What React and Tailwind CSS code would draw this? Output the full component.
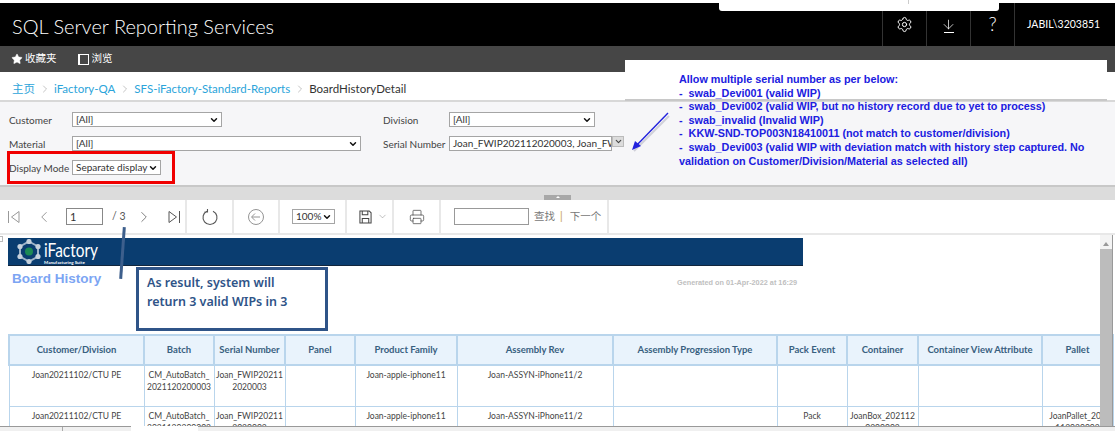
import React from "react";
import { Settings, ArrowDown, Star, Printer, ChevronDown, ChevronLeft, ChevronRight } from "lucide-react";

const ui = { fontFamily: 'Lato, "Noto Sans CJK SC", sans-serif' };
const arial = { fontFamily: '"Liberation Sans", sans-serif' };

const columns = [
  ["Customer/Division", 135],
  ["Batch", 70],
  ["Serial Number", 71],
  ["Panel", 70],
  ["Product Family", 102],
  ["Assembly Rev", 156],
  ["Assembly Progression Type", 164],
  ["Pack Event", 70],
  ["Container", 71],
  ["Container View Attribute", 124],
  ["Pallet", 71],
];

const rows = [
  ["Joan20211102/CTU PE", "CM_AutoBatch_\n2021120200003", "Joan_FWIP20211\n2020003", "", "Joan-apple-iphone11", "Joan-ASSYN-iPhone11/2", "", "", "", "", ""],
  ["Joan20211102/CTU PE", "CM_AutoBatch_\n2021120200003", "Joan_FWIP20211\n2020003", "", "Joan-apple-iphone11", "Joan-ASSYN-iPhone11/2", "", "Pack", "JoanBox_202112\n0200003", "", "JoanPallet_202\n112020003"],
];

const notes = [
  "Allow multiple serial number as per below:",
  "-  swab_Devi001 (valid WIP)",
  "-  swab_Devi002 (valid WIP, but no history record due to yet to process)",
  "-  swab_invalid (Invalid WIP)",
  "-  KKW-SND-TOP003N18410011 (not match to customer/division)",
  "-  swab_Devi003 (valid WIP with deviation match with history step captured. No",
  "validation on Customer/Division/Material as selected all)",
];

function Field({ children, className }) {
  return (
    <div className={"flex h-[15px] items-center justify-between border border-[#a5a5a5] bg-white pl-[3px] pr-[2px] text-[10px] leading-[13px] text-[#333] " + className}>
      <span className="whitespace-nowrap">{children}</span>
      <ChevronDown size={10} strokeWidth={3.5} className="shrink-0 text-[#111]" />
    </div>
  );
}

function Label({ children }) {
  return <span className="whitespace-nowrap pt-px text-[10px] leading-[15px] text-[#444]">{children}</span>;
}

function Logo() {
  const dots = [[12, 2.5], [21, 7.5], [21, 17.5], [12, 22.5], [3, 17.5], [3, 7.5]];
  return (
    <div className="flex items-center gap-[3px]">
      <svg width="24" height="25" viewBox="0 0 24 25">
        <polygon points="12,2.5 21,7.5 21,17.5 12,22.5 3,17.5 3,7.5" fill="none" stroke="#9fb4c8" strokeWidth="2" />
        {dots.map(([cx, cy]) => (
          <circle key={cx + "-" + cy} cx={cx} cy={cy} r="2.6" fill="#c5d0db" />
        ))}
        <circle cx="12" cy="12.5" r="4" fill="#1c8a55" />
      </svg>
      <div className="flex w-[54px] flex-col text-white">
        <span className="origin-left scale-x-[0.77] whitespace-nowrap text-[20px] leading-[20px]">iFactory</span>
        <span className="mt-[2px] whitespace-nowrap text-[4.5px] font-bold leading-[4px]">Manufacturing Suite</span>
      </div>
    </div>
  );
}

function ToolGroup({ children, className }) {
  return <div className={"flex h-full items-center border-r-2 border-[#e8e8e8] " + className}>{children}</div>;
}

export default function App() {
  return (
    <div className="relative flex h-[431px] w-[1115px] flex-col overflow-hidden bg-white" style={ui}>
      <div className="h-[3px] bg-white" />
      <header className="flex h-[43px] items-stretch justify-between bg-black text-white">
        <h1 className="pl-3 text-[20px] font-light leading-[47px]">SQL Server Reporting Services</h1>
        <div className="flex">
          <div className="flex w-[44px] items-center justify-center border-l border-[#333]"><Settings size={17} strokeWidth={1.4} /></div>
          <div className="flex w-[44px] items-center justify-center border-l border-[#333]">
            <div className="flex flex-col items-center">
              <ArrowDown size={15} strokeWidth={1.2} />
              <div className="h-px w-[10px] bg-white" />
            </div>
          </div>
          <div className="flex w-[44px] items-center justify-center border-l border-[#333] text-[19px] font-light">?</div>
          <div className="flex w-[101px] items-center border-l border-[#333] pl-[12px] text-[10.5px]">JABIL\3203851</div>
        </div>
      </header>
      <nav className="flex h-[26px] items-center gap-[21px] bg-[#464646] pl-[11px] text-[10.5px] text-white">
        <span className="flex items-center gap-[2px]"><Star size={12} fill="white" strokeWidth={1} />收藏夹</span>
        <span className="flex items-center gap-[3px]">
          <span className="h-[11px] w-[11px] border border-l-2 border-white" />
          浏览
        </span>
      </nav>
      <div className="flex h-[30px] items-center gap-[3.5px] border-b-2 border-[#d8d8d8] pl-3 pt-[5px] text-[11.5px] text-[#2ba4da]">
        <span>主页</span>
        <ChevronRight size={12} strokeWidth={1} className="text-[#888]" />
        <span>iFactory-QA</span>
        <ChevronRight size={12} strokeWidth={1} className="text-[#888]" />
        <span>SFS-iFactory-Standard-Reports</span>
        <ChevronRight size={12} strokeWidth={1} className="text-[#888]" />
        <span className="text-[#333]">BoardHistoryDetail</span>
      </div>
      <section className="grid h-[85px] grid-cols-[63px_289px_22px_66px_1fr] grid-rows-[15px_15px_15px] content-start gap-y-[9px] border-b-2 border-[#c8c8c8] bg-[#f6f6f8] pl-[9px] pt-[10px]">
        <Label>Customer</Label>
        <Field className="w-[150px]">[All]</Field>
        <span />
        <Label>Division</Label>
        <Field className="w-[146px]">[All]</Field>

        <Label>Material</Label>
        <Field className="w-[289px]">[All]</Field>
        <span />
        <Label>Serial Number</Label>
        <div className="flex h-full items-start">
          <div className="h-[15px] w-[163px] overflow-hidden whitespace-nowrap border border-[#a5a5a5] bg-white pl-[3px] text-[10px] leading-[13px] text-[#333]">
            Joan_FWIP202112020003, Joan_FWIP
          </div>
          <div className="flex h-[11px] w-[12px] items-center justify-center border border-[#bbb] bg-[#dcdcdc]">
            <ChevronDown size={9} strokeWidth={3} className="text-[#444]" />
          </div>
        </div>

        <Label>Display Mode</Label>
        <Field className="w-[89px]">Separate display</Field>
      </section>
      <div className="flex h-[13px] items-start justify-center bg-[#dcdcdc] pt-[8px]">
        <div className="flex h-[5px] w-[27px] justify-center bg-[#a8a8a8] pt-[1px]">
          <span className="h-0 w-0 border-x-[2px] border-b-[2px] border-x-transparent border-b-white" />
        </div>
      </div>
      <div className="flex h-[35px] items-stretch border-b-2 border-[#e8e8e8] text-[#777]">
        <ToolGroup className="w-[187px] pl-[5px] text-[10.5px]">
          <svg width="16" height="16" viewBox="0 0 16 16" fill="none" stroke="#999" strokeWidth="1" className="ml-[1px]"><path d="M2.5 2v12M13 2.5 5.5 8l7.5 5.5z" /></svg>
          <ChevronLeft size={18} strokeWidth={1} className="ml-[13px]" />
          <div className="ml-[13px] h-[17px] w-[37px] border border-[#888] bg-white pl-[3px] text-[11px] leading-[15px] text-[#333]">1</div>
          <span className="ml-[9px] text-[#555]">/ 3</span>
          <ChevronRight size={18} strokeWidth={1} className="ml-[9px] text-[#555]" />
          <svg width="16" height="16" viewBox="0 0 16 16" fill="none" stroke="#555" strokeWidth="1" className="ml-[13px]"><path d="M13.5 2v12M3 2.5 10.5 8 3 13.5z" /></svg>
        </ToolGroup>
        <ToolGroup className="w-[47px] justify-center">
          <svg width="18" height="18" viewBox="0 0 18 18" fill="none" stroke="#555" strokeWidth="1.1"><path d="M6 3.2A7 7 0 1 0 12 3.2M6.5 1v3H3.5" /></svg>
        </ToolGroup>
        <ToolGroup className="w-[46px] justify-center">
          <svg width="18" height="18" viewBox="0 0 18 18" fill="none" stroke="#888" strokeWidth="0.9"><circle cx="9" cy="9" r="7.5" /><path d="M13 9H5M8 5.5 4.5 9 8 12.5" /></svg>
        </ToolGroup>
        <ToolGroup className="w-[67px] pl-[12px]">
          <Field className="w-[43px] border-[#888] pl-[2px]">100%</Field>
        </ToolGroup>
        <ToolGroup className="w-[47px] justify-center gap-[5px] pl-[8px]">
          <svg width="13" height="14" viewBox="0 0 14 15" fill="none" stroke="#444" strokeWidth="1.1"><path d="M1 1h10l2 2v11H1zM3.5 1v4h6V1M3.5 14V9h7v5" /></svg>
          <ChevronDown size={11} strokeWidth={1} />
        </ToolGroup>
        <ToolGroup className="w-[47px] justify-center">
          <Printer size={16} strokeWidth={1.1} className="text-[#444]" />
        </ToolGroup>
        <ToolGroup className="w-[168px] gap-[5px] pl-[13px] text-[10.5px]">
          <div className="h-[17px] w-[75px] border border-[#999] bg-white" />
          <span className="text-[#777]">查找</span>
          <span className="text-[#c49a45]">|</span>
          <span className="ml-[2px] text-[#777]">下一个</span>
        </ToolGroup>
      </div>
      <main className="relative min-h-0 flex-1 overflow-hidden pl-2 pt-[3px]">
        <div className="flex h-[28px] w-[795px] items-center border-b border-[#12263d] bg-[#0a3d70] pl-[9px]">
          <Logo />
        </div>
        <div className="flex h-[27px] w-[789px] items-start justify-between pl-1">
          <span className="pt-[3px] text-[13.5px] font-bold text-[#7ca5f3]" style={arial}>Board History</span>
          <span className="pt-[12px] text-[7.3px] font-bold text-[#c0c0c0]" style={arial}>Generated on 01-Apr-2022 at 16:29</span>
        </div>
        <table className="mt-[41px] w-[1104px] table-fixed border-collapse text-center text-[8.5px] text-[#444]">
          <colgroup>
            {columns.map(([name, w]) => <col key={name} width={w} />)}
          </colgroup>
          <thead>
            <tr className="h-[30px] bg-[#e9f3fc]">
              {columns.map(([name]) => (
                <th key={name} className="border-2 border-[#b9d5ec] px-0 text-[9.5px] font-bold text-[#38607f]">{name}</th>
              ))}
            </tr>
          </thead>
          <tbody>
            {rows.map((row, i) => (
              <tr key={i} className="h-[41px]">
                {row.map((cell, j) => (
                  <td key={j} className="h-[41px] overflow-hidden whitespace-pre-line border border-[#b9d5ec] px-0 pt-[3px] align-top leading-[12px]">{cell}</td>
                ))}
              </tr>
            ))}
          </tbody>
        </table>
        <div className="absolute right-[2px] top-0 flex h-full w-[13px] flex-col items-center border-r border-[#999] bg-[#f4f4f4]">
          <span className="mt-[7px] h-0 w-0 border-x-[3px] border-b-[4px] border-x-transparent border-b-[#999]" />
          <span className="mt-[3px] w-full flex-1 bg-[#bcbcbc]" />
        </div>
        <div className="absolute left-0 top-[1px] h-[6px] w-[3px] border border-l-0 border-[#bbb] bg-white" />
      </main>
      <footer className="relative h-[5px] border-t border-[#999] bg-[#f0f0f0]">
        <div className="absolute left-[131px] top-[-1px] h-[6px] w-[67px] bg-white" />
        <div className="absolute left-[62px] top-0 h-[5px] w-px bg-[#aaa]" />
      </footer>

      {/* annotations pasted over the report */}
      <div className="absolute left-[719px] top-0 h-[11px] w-[280px] rounded-b-[3px] bg-white">
        <div className="ml-[189px] h-[4px] w-px bg-[#ccc]" />
      </div>
      <div className="absolute left-[625px] top-[60px] h-[41px] w-[482px] border-b-2 border-[#c8c8c8] bg-white" />
      <div className="absolute left-[679px] top-[73px] whitespace-pre text-[10.8px] font-bold leading-[13.6px] text-[#2020e0]" style={arial}>
        {notes.map((line) => <div key={line}>{line}</div>)}
      </div>
      <svg className="absolute left-[625px] top-[108px]" width="50" height="48" viewBox="0 0 50 48">
        <path d="M9 41 44 6" stroke="#99a" strokeWidth="2" opacity="0.4" fill="none" transform="translate(0 2)" />
        <path d="M9 40 43 5" stroke="#2222dd" strokeWidth="1.4" fill="none" />
        <path d="M7 42 10 33 16 38z" fill="#2222dd" />
      </svg>
      <div className="absolute left-[7px] top-[151px] h-[33px] w-[168px] border-[3px] border-[#f00000]" />
      <div className="absolute left-[121px] top-[227px] h-[52px] w-[3px] rotate-[4deg] bg-[#3d5f8c]" />
      <div className="absolute left-[136px] top-[267px] h-[64px] w-[192px] border-[3px] border-[#2f5488] bg-white pl-[8px] pt-[3px] text-[12.5px] font-semibold leading-[19px] text-[#2f5488]" style={{ fontFamily: '"Noto Sans", sans-serif' }}>
        As result, system will<br />return 3 valid WIPs in 3
      </div>
    </div>
  );
}
